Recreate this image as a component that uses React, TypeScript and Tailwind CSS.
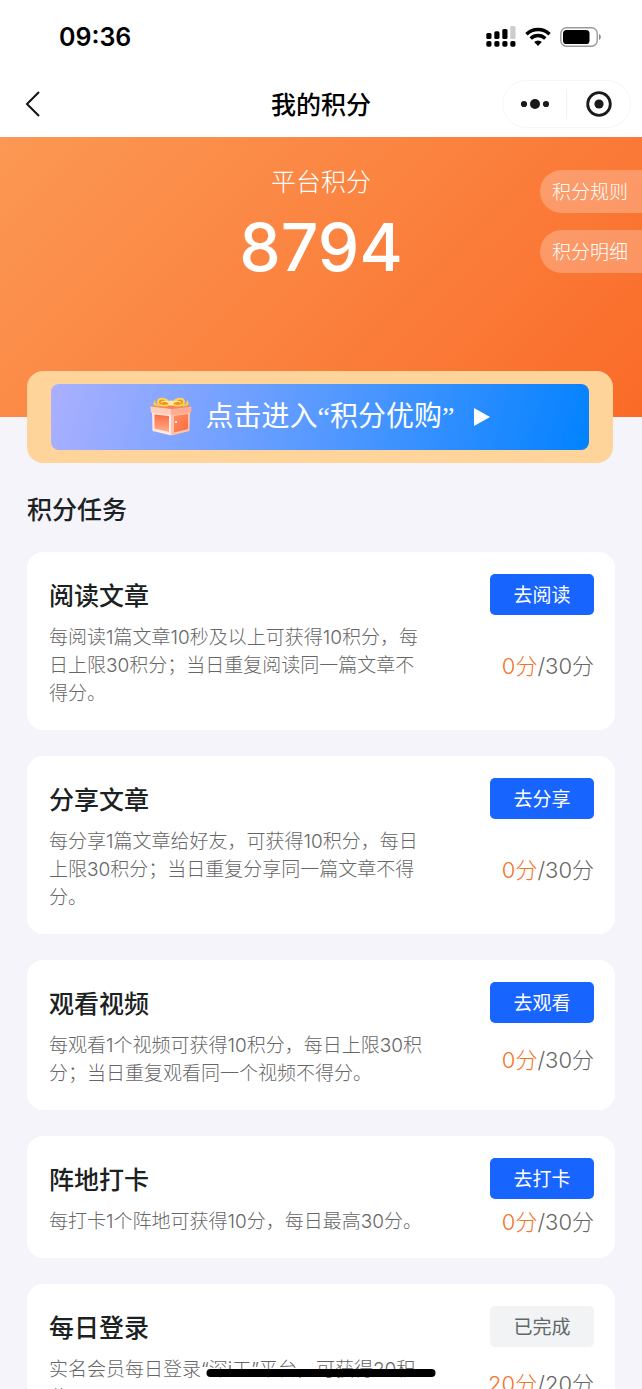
import React from 'react';

interface Task {
  id: string;
  title: string;
  description: string;
  action: string;
  earned: number;
  limit: number;
  done?: boolean;
}

const tasks: Task[] = [
  {
    id: 'read',
    title: '阅读文章',
    description: '每阅读1篇文章10秒及以上可获得10积分，每日上限30积分；当日重复阅读同一篇文章不得分。',
    action: '去阅读',
    earned: 0,
    limit: 30,
  },
  {
    id: 'share',
    title: '分享文章',
    description: '每分享1篇文章给好友，可获得10积分，每日上限30积分；当日重复分享同一篇文章不得分。',
    action: '去分享',
    earned: 0,
    limit: 30,
  },
  {
    id: 'watch',
    title: '观看视频',
    description: '每观看1个视频可获得10积分，每日上限30积分；当日重复观看同一个视频不得分。',
    action: '去观看',
    earned: 0,
    limit: 30,
  },
  {
    id: 'checkin',
    title: '阵地打卡',
    description: '每打卡1个阵地可获得10分，每日最高30分。',
    action: '去打卡',
    earned: 0,
    limit: 30,
  },
  {
    id: 'login',
    title: '每日登录',
    description: '实名会员每日登录“深i工”平台，可获得20积分。',
    action: '已完成',
    earned: 20,
    limit: 20,
    done: true,
  },
];

function SignalIcon() {
  return (
    <svg width="30" height="22" viewBox="0 0 30 22" aria-hidden="true">
      <rect x="0.3" y="7" width="5.2" height="6" rx="1.6" />
      <rect x="8.3" y="5.2" width="5.2" height="7.8" rx="1.6" />
      <rect x="16.3" y="3" width="5.2" height="10" rx="1.6" />
      <rect x="24.3" y="0" width="5.2" height="13" rx="1.6" fill="#cccccc" />
      {[0.3, 8.3, 16.3, 24.3].map((x) => (
        <rect key={x} x={x} y="15" width="5.2" height="5.8" rx="1.8" />
      ))}
    </svg>
  );
}

function WifiIcon() {
  return (
    <svg width="26" height="20" viewBox="0 0 26 20" fill="none" aria-hidden="true">
      <path d="M1.5 7.2a16.4 16.4 0 0 1 23 0" stroke="#000" strokeWidth="3.6" />
      <path d="M5.7 11.5a10.4 10.4 0 0 1 14.6 0" stroke="#000" strokeWidth="3.4" />
      <path d="M13 19l-3.8-3.9a5.5 5.5 0 0 1 7.6 0z" fill="#000" />
    </svg>
  );
}

function BatteryIcon() {
  return (
    <svg width="42" height="20" viewBox="0 0 42 20" aria-hidden="true">
      <rect x="0.8" y="0.8" width="36.4" height="18.4" rx="5.6" fill="none" stroke="#9a9a9a" strokeWidth="1.4" />
      <rect x="3" y="3" width="26.5" height="14" rx="3.6" />
      <path d="M39 7c2.4 1 2.4 5 0 6z" fill="#8a8a8a" />
    </svg>
  );
}

function GiftIcon() {
  return (
    <svg width="42" height="40" viewBox="0 0 42 40" aria-hidden="true">
      <defs>
        <linearGradient id="giftFront" x1="0" y1="0" x2="0" y2="1">
          <stop offset="0" stopColor="#fb6d42" />
          <stop offset="1" stopColor="#ffad8c" />
        </linearGradient>
        <linearGradient id="giftSide" x1="0" y1="0" x2="1" y2="1">
          <stop offset="0" stopColor="#ff8e62" />
          <stop offset="1" stopColor="#f96c40" />
        </linearGradient>
      </defs>
      <path d="M2 15l19.5 2v21.5L2.5 34z" fill="#ffe9df" />
      <path d="M21.5 17L40 15l-.5 19-18 4.5z" fill="#ffc3ab" />
      <path d="M4.5 17.5L19 19v16L4.5 31.5z" fill="url(#giftFront)" />
      <path d="M24 19l14-2v15l-14 3.5z" fill="url(#giftSide)" />
      <path d="M1 9.5l20-2 20 2-19.5 3z" fill="#fb8059" />
      <path d="M.5 9.5l21 2.5v6.5L.8 15.5z" fill="#ffcdb8" />
      <path d="M21.5 12l20-2.5-.3 6-19.7 3z" fill="#ffad90" />
      <path d="M20 6C15 0 8 1 8 5c0 4 8 5 12 2z" fill="#e9961c" stroke="#ffd24f" strokeWidth="2" />
      <path d="M22 6c5-6 12-5 12-1 0 4-8 5-12 2z" fill="#e9961c" stroke="#ffd24f" strokeWidth="2" />
      <path d="M11 5.5c3-2 6-1.5 8 .5M31 5.5c-3-2-6-1.5-8 .5" fill="none" stroke="#ffe9c2" strokeWidth="1.4" />
      <path d="M5 2c0 4 2 6 6 7-4 1-7 0-8-2M37 2c0 4-2 6-6 7 4 1 7 0 8-2" fill="#ffc936" />
      <circle cx="21" cy="6" r="2.6" fill="#ffeab0" />
      <circle cx="26" cy="25" r="1.1" fill="#fff" />
    </svg>
  );
}

function StatusBar() {
  return (
    <div className="flex h-[71px] items-center justify-between pt-0.5 pr-10 pl-[59px]">
      <time className="text-[25px] leading-8 font-semibold text-black">09:36</time>
      <div className="flex items-center gap-[9px]">
        <SignalIcon />
        <WifiIcon />
        <BatteryIcon />
      </div>
    </div>
  );
}

function NavBar() {
  return (
    <div className="grid h-[66px] grid-cols-[1fr_auto_1fr] items-center px-[11px]">
      <button type="button" aria-label="返回" className="flex h-10 w-[42px] items-center justify-center">
        <svg width="24" height="26" viewBox="0 0 24 26" fill="none" stroke="#111" strokeWidth="2" aria-hidden="true">
          <path d="M19 1L7 13l12 12" />
        </svg>
      </button>
      <h1 className="pt-0.5 text-[25px] leading-9 font-medium text-black">我的积分</h1>
      <div className="flex h-12 w-[129px] items-center justify-self-end rounded-full border border-[#f6f6f6]">
        <button type="button" aria-label="更多" className="flex flex-1 justify-center">
          <svg width="30" height="12" viewBox="0 0 30 12" fill="#1a1a1a" aria-hidden="true">
            <circle cx="4" cy="6" r="3.1" />
            <circle cx="15" cy="6" r="5" />
            <circle cx="26" cy="6" r="3.1" />
          </svg>
        </button>
        <span className="h-[30px] w-px bg-[#f0f0f0]" />
        <button type="button" aria-label="关闭" className="flex flex-1 justify-center">
          <svg width="26" height="26" viewBox="0 0 26 26" aria-hidden="true">
            <circle cx="13" cy="13" r="11.3" fill="none" stroke="#1a1a1a" strokeWidth="2.8" />
            <circle cx="13" cy="13" r="4.6" fill="#1a1a1a" />
          </svg>
        </button>
      </div>
    </div>
  );
}

function PointsHero({ points }: { points: number }) {
  return (
    <section className="grid h-[280px] grid-cols-[1fr_auto_1fr] items-start bg-linear-135 from-[#fb9853] to-[#fa6a27] pt-[27px] text-white">
      <div className="col-start-2 text-center">
        <p className="text-[25px] leading-9 font-light">平台积分</p>
        <p className="text-[66px] leading-[94px] font-medium">{points}</p>
      </div>
      <div className="mt-1.5 flex flex-col items-end gap-[17px]">
        {['积分规则', '积分明细'].map((label) => (
          <button
            key={label}
            type="button"
            className="h-[43px] rounded-l-full bg-white/25 pt-1 pr-3.5 pl-3 text-[19px] font-light"
          >
            {label}
          </button>
        ))}
      </div>
    </section>
  );
}

function ShopBanner() {
  return (
    <div className="relative -mt-[46px] mr-0.5 rounded-2xl bg-[#fed49b] px-6 py-[13px]">
      <button
        type="button"
        className="flex h-[66px] w-full items-center justify-center rounded-lg bg-linear-[105deg] from-[#abb0ff] to-[#0282ff] text-white"
      >
        <GiftIcon />
        <span className="ml-3.5 font-['Liberation_Serif','Noto_Sans_CJK_SC',sans-serif] text-[28px]">
          点击进入“积分优购”
        </span>
        <svg width="16" height="18" viewBox="0 0 16 18" fill="#fff" className="ml-5" aria-hidden="true">
          <path d="M0 0l16 9-16 9z" />
        </svg>
      </button>
    </div>
  );
}

function TaskCard({ task }: { task: Task }) {
  return (
    <li className="grid grid-cols-[1fr_auto] items-center gap-x-[60px] gap-y-1.5 rounded-2xl bg-white pt-[22px] pr-[21px] pb-[22px] pl-[22px]">
      <h3 className="text-[25px] leading-[44px] font-medium text-[#1c2122]">{task.title}</h3>
      <button
        type="button"
        disabled={task.done}
        className="h-[41px] w-[104px] self-start justify-self-end rounded-[5px] bg-[#1864ff] pt-1 text-[19px] text-white disabled:bg-[#f2f3f5] disabled:text-[#5f6867]"
      >
        {task.action}
      </button>
      <p className="text-[19px] leading-7 font-light text-[#666666]">{task.description}</p>
      <p className="text-right text-[22px] leading-7 font-light whitespace-nowrap text-[#666666]">
        <span className="text-[#f5741f]">{task.earned}分</span>/{task.limit}分
      </p>
    </li>
  );
}

export default function App() {
  return (
    <div
      lang="zh-CN"
      className="flex h-screen flex-col overflow-hidden bg-[#f5f4fb] font-['Inter','Noto_Sans_CJK_SC',sans-serif]"
    >
      <header className="shrink-0 bg-white">
        <StatusBar />
        <NavBar />
      </header>

      <main className="min-h-0 flex-1 overflow-y-auto [scrollbar-width:none]">
        <PointsHero points={8794} />
        <div className="px-[27px] pb-12">
          <ShopBanner />
          <h2 className="mt-[29px] text-[25px] leading-9 font-medium text-[#1c2122]">积分任务</h2>
          <ul className="mt-6 flex flex-col gap-[26px]">
            {tasks.map((task) => (
              <TaskCard key={task.id} task={task} />
            ))}
          </ul>
        </div>
      </main>

      {/* home indicator */}
      <div className="fixed bottom-3 left-1/2 h-2 w-[229px] -translate-x-1/2 rounded-full bg-black" />
    </div>
  );
}
